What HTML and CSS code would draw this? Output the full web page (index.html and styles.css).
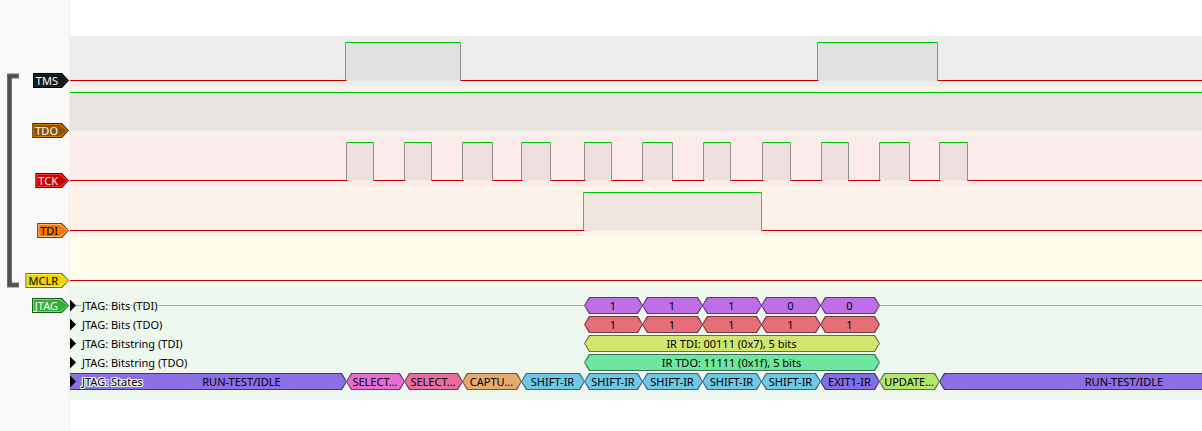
FILE: index.html
```html
<!DOCTYPE html>
<html lang="en">
<head>
<meta charset="utf-8">
<title>JTAG trace</title>
<link rel="stylesheet" href="styles.css">
</head>
<body>
<main class="viewer">
  <section class="group">
    <svg class="bracket" width="12" height="215" viewBox="0 0 12 215" aria-hidden="true">
      <path class="bracket-edge" d="M12 3H2.5V212H12"/>
      <path class="bracket-core" d="M11 3H2.5V212H11"/>
    </svg>
    <div class="channel tms">
      <div class="gutter"><span class="tag">TMS</span></div>
      <svg class="wave" aria-hidden="true"><g transform="translate(.5 .5)">
        <path class="fill" d="M275 6H390V44H275ZM747 6H867V44H747Z"/>
        <path class="edge" d="M275 6V44M390 6V44M747 6V44M867 6V44"/>
        <path class="high" d="M275 6H390M747 6H867"/>
        <path class="low" d="M-1 44H276M390 44H748M867 44H8000"/>
      </g></svg>
    </div>
    <div class="channel tdo">
      <div class="gutter"><span class="tag">TDO</span></div>
      <svg class="wave" aria-hidden="true"><g transform="translate(.5 .5)">
        <path class="fill" d="M-1 6H8000V44H-1Z"/>
        <path class="high" d="M-1 6H8000"/>
      </g></svg>
    </div>
    <div class="channel tck">
      <div class="gutter"><span class="tag">TCK</span></div>
      <svg class="wave" aria-hidden="true"><g transform="translate(.5 .5)">
        <path class="fill" d="M276 6H303V44H276ZM334 6H361V44H334ZM392 6H422V44H392ZM451 6H480V44H451ZM514 6H541V44H514ZM572 6H602V44H572ZM633 6H660V44H633ZM692 6H720V44H692ZM751 6H778V44H751ZM809 6H839V44H809ZM869 6H897V44H869Z"/>
        <path class="edge" d="M276 6V44M303 6V44M334 6V44M361 6V44M392 6V44M422 6V44M451 6V44M480 6V44M514 6V44M541 6V44M572 6V44M602 6V44M633 6V44M660 6V44M692 6V44M720 6V44M751 6V44M778 6V44M809 6V44M839 6V44M869 6V44M897 6V44"/>
        <path class="high" d="M276 6H303M334 6H361M392 6H422M451 6H480M514 6H541M572 6H602M633 6H660M692 6H720M751 6H778M809 6H839M869 6H897"/>
        <path class="low" d="M-1 44H277M303 44H335M361 44H393M422 44H452M480 44H515M541 44H573M602 44H634M660 44H693M720 44H752M778 44H810M839 44H870M897 44H8000"/>
      </g></svg>
    </div>
    <div class="channel tdi">
      <div class="gutter"><span class="tag">TDI</span></div>
      <svg class="wave" aria-hidden="true"><g transform="translate(.5 .5)">
        <path class="fill" d="M513 6H691V44H513Z"/>
        <path class="edge" d="M513 6V44M691 6V44"/>
        <path class="high" d="M513 6H691"/>
        <path class="low" d="M-1 44H514M691 44H8000"/>
      </g></svg>
    </div>
    <div class="channel mclr">
      <div class="gutter"><span class="tag">MCLR</span></div>
      <svg class="wave" aria-hidden="true"><g transform="translate(.5 .5)">
        <path class="low" d="M-1 44H8000"/>
      </g></svg>
    </div>
  </section>

  <section class="decoder jtag">
    <div class="gutter"><span class="tag">JTAG</span></div>
    <div class="rows">
      <div class="row baseline">
        <div class="segments">
          <span class="gap" style="width:515px"></span>
          <span class="seg purple" style="width:58px">1</span>
          <span class="seg purple" style="width:60px">1</span>
          <span class="seg purple" style="width:59px">1</span>
          <span class="seg purple" style="width:59px">0</span>
          <span class="seg purple" style="width:59px">0</span>
        </div>
        <span class="name">JTAG: Bits (TDI)</span>
      </div>
      <div class="row">
        <div class="segments">
          <span class="gap" style="width:515px"></span>
          <span class="seg red" style="width:58px">1</span>
          <span class="seg red" style="width:60px">1</span>
          <span class="seg red" style="width:59px">1</span>
          <span class="seg red" style="width:59px">1</span>
          <span class="seg red" style="width:59px">1</span>
        </div>
        <span class="name">JTAG: Bits (TDO)</span>
      </div>
      <div class="row">
        <div class="segments">
          <span class="gap" style="width:515px"></span>
          <span class="seg lime" style="width:295px">IR TDI: 00111 (0x7), 5 bits</span>
        </div>
        <span class="name">JTAG: Bitstring (TDI)</span>
      </div>
      <div class="row">
        <div class="segments">
          <span class="gap" style="width:515px"></span>
          <span class="seg mint" style="width:295px">IR TDO: 11111 (0x1f), 5 bits</span>
        </div>
        <span class="name">JTAG: Bitstring (TDO)</span>
      </div>
      <div class="row">
        <div class="segments">
          <span class="seg violet first" style="width:277px">RUN-TEST/IDLE</span>
          <span class="seg magenta" style="width:58px">SELECT…</span>
          <span class="seg pink" style="width:58px">SELECT…</span>
          <span class="seg orange" style="width:59px">CAPTU…</span>
          <span class="seg sky" style="width:63px">SHIFT-IR</span>
          <span class="seg sky" style="width:58px">SHIFT-IR</span>
          <span class="seg sky" style="width:60px">SHIFT-IR</span>
          <span class="seg sky" style="width:59px">SHIFT-IR</span>
          <span class="seg sky" style="width:59px">SHIFT-IR</span>
          <span class="seg indigo" style="width:59px">EXIT1-IR</span>
          <span class="seg green" style="width:60px">UPDATE…</span>
          <span class="seg violet last">RUN-TEST/IDLE</span>
        </div>
        <span class="name">JTAG: States</span>
      </div>
    </div>
  </section>
</main>
</body>
</html>
```
FILE: styles.css
```css
* { box-sizing: border-box; }

body {
  margin: 0;
  background: #fff;
  color: #000;
  font: 11px/15px "Noto Sans", sans-serif;
}

.viewer {
  min-height: 100vh;
  padding-top: 36px;
  background: linear-gradient(to right, #f9f9f9 69px, #efefef 69px, #efefef 70px, #fff 70px);
  overflow: hidden;
}

.group { position: relative; }

.bracket {
  position: absolute;
  left: 7px;
  top: 37px;
}
.bracket path { fill: none; }
.bracket-edge { stroke: #6c6e6a; stroke-width: 5; }
.bracket-core { stroke: #4e504c; stroke-width: 3; }

.channel,
.decoder {
  display: grid;
  grid-template-columns: 70px minmax(0, 1fr);
}
.channel { height: 50px; }

.gutter {
  display: flex;
  justify-content: flex-end;
  align-items: flex-start;
  padding: 37px 1px 0 0;
}
.decoder .gutter { padding-top: 12px; }

.tag {
  position: relative;
  z-index: 0;
  flex: none;
  height: 15px;
  padding: 0 11px 0 3px;
  background: var(--rim);
  color: var(--ink, #fff);
  white-space: nowrap;
}
.tag,
.tag::before,
.tag::after {
  clip-path: polygon(0 0, calc(100% - 7px) 0, 100% 50%, calc(100% - 7px) 100%, 0 100%);
}
.tag::before,
.tag::after {
  content: "";
  position: absolute;
  z-index: -1;
  inset: 1px;
  background: var(--glow);
}
.tag::after {
  inset: 2px;
  background: var(--face);
}

.tms { --rim: #000; --glow: #1d2426; --face: #16191a; }
.tdo { --rim: #472800; --glow: #da7b00; --face: #8f5202; }
.tck { --rim: #660000; --glow: #ff3838; --face: #cc0000; }
.tdi { --rim: #7a3d00; --glow: #ffb26b; --face: #f57900; --ink: #000; }
.mclr { --rim: #766a00; --glow: #fff04f; --face: #edd400; --ink: #000; }
.jtag { --rim: #1a5c1c; --glow: #5bf05f; --face: #33ac35; }

.wave {
  display: block;
  width: 100%;
  height: 50px;
}
.tms .wave { background: #ececec; }
.tdo .wave { background: #f5f1eb; }
.tck .wave { background: #fbebeb; }
.tdi .wave { background: #fef3eb; }
.mclr .wave { background: #fefdeb; }

.wave path { fill: none; }
.wave .fill { fill: rgba(0, 0, 0, .05); }
.wave .edge { stroke: #8f8f8f; }
.wave .high { stroke: #00c000; }
.wave .low { stroke: #c00000; }

.rows {
  display: flex;
  flex-direction: column;
  gap: 2px;
  padding: 11px 0 10px;
  background: #eef7ee;
  overflow: hidden;
}
.row {
  display: grid;
  height: 17px;
  line-height: 17px;
}
.segments,
.name {
  grid-area: 1 / 1;
  min-width: 0;
}
.segments { display: flex; }
.baseline {
  background: linear-gradient(#a2aaa2, #a2aaa2) 0 8px / 100% 1px no-repeat;
}

.name {
  display: flex;
  align-items: center;
  gap: 6px;
  z-index: 1;
  justify-self: start;
  text-shadow: 1px 0 #eef7ee, -1px 0 #eef7ee, 0 1px #eef7ee, 0 -1px #eef7ee,
    1px 1px #eef7ee, -1px -1px #eef7ee, 1px -1px #eef7ee, -1px 1px #eef7ee;
}
.name::before {
  content: "";
  width: 6px;
  height: 12px;
  background: #000;
  clip-path: polygon(0 0, 100% 50%, 0 100%);
}

.gap { flex: none; }

/* Neighbouring segments share one pixel, so their tips touch. */
.seg {
  position: relative;
  z-index: 0;
  flex: none;
  box-sizing: content-box;
  margin-left: -1px;
  padding-right: 1px;
  background: var(--rim);
  text-align: center;
  white-space: nowrap;
}
.seg::before {
  content: "";
  position: absolute;
  z-index: -1;
  inset: 1px;
  background: var(--face);
}
.seg,
.seg::before {
  clip-path: polygon(5px 0, calc(100% - 5px) 0, 100% 50%, calc(100% - 5px) 100%, 5px 100%, 0 50%);
}
.first {
  box-sizing: border-box;
  margin-left: 0;
  padding-left: 67px;
}
.first::before { left: 0; }
.first,
.first::before {
  clip-path: polygon(0 0, calc(100% - 5px) 0, 100% 50%, calc(100% - 5px) 100%, 0 100%);
}
.last { flex: 1 0 370px; }

.purple { --face: #be6ee6; --rim: #5f3773; }
.red { --face: #e66e78; --rim: #73373c; }
.lime { --face: #d2e66e; --rim: #697337; }
.mint { --face: #6ee6a0; --rim: #377350; }
.violet { --face: #8c6ee6; --rim: #463773; }
.magenta { --face: #e66ed2; --rim: #733769; }
.pink { --face: #e66ea0; --rim: #733750; }
.orange { --face: #e6aa6e; --rim: #735537; }
.sky { --face: #6ec8e6; --rim: #376473; }
.indigo { --face: #826ee6; --rim: #413773; }
.green { --face: #b4e66e; --rim: #5a7337; }
```
